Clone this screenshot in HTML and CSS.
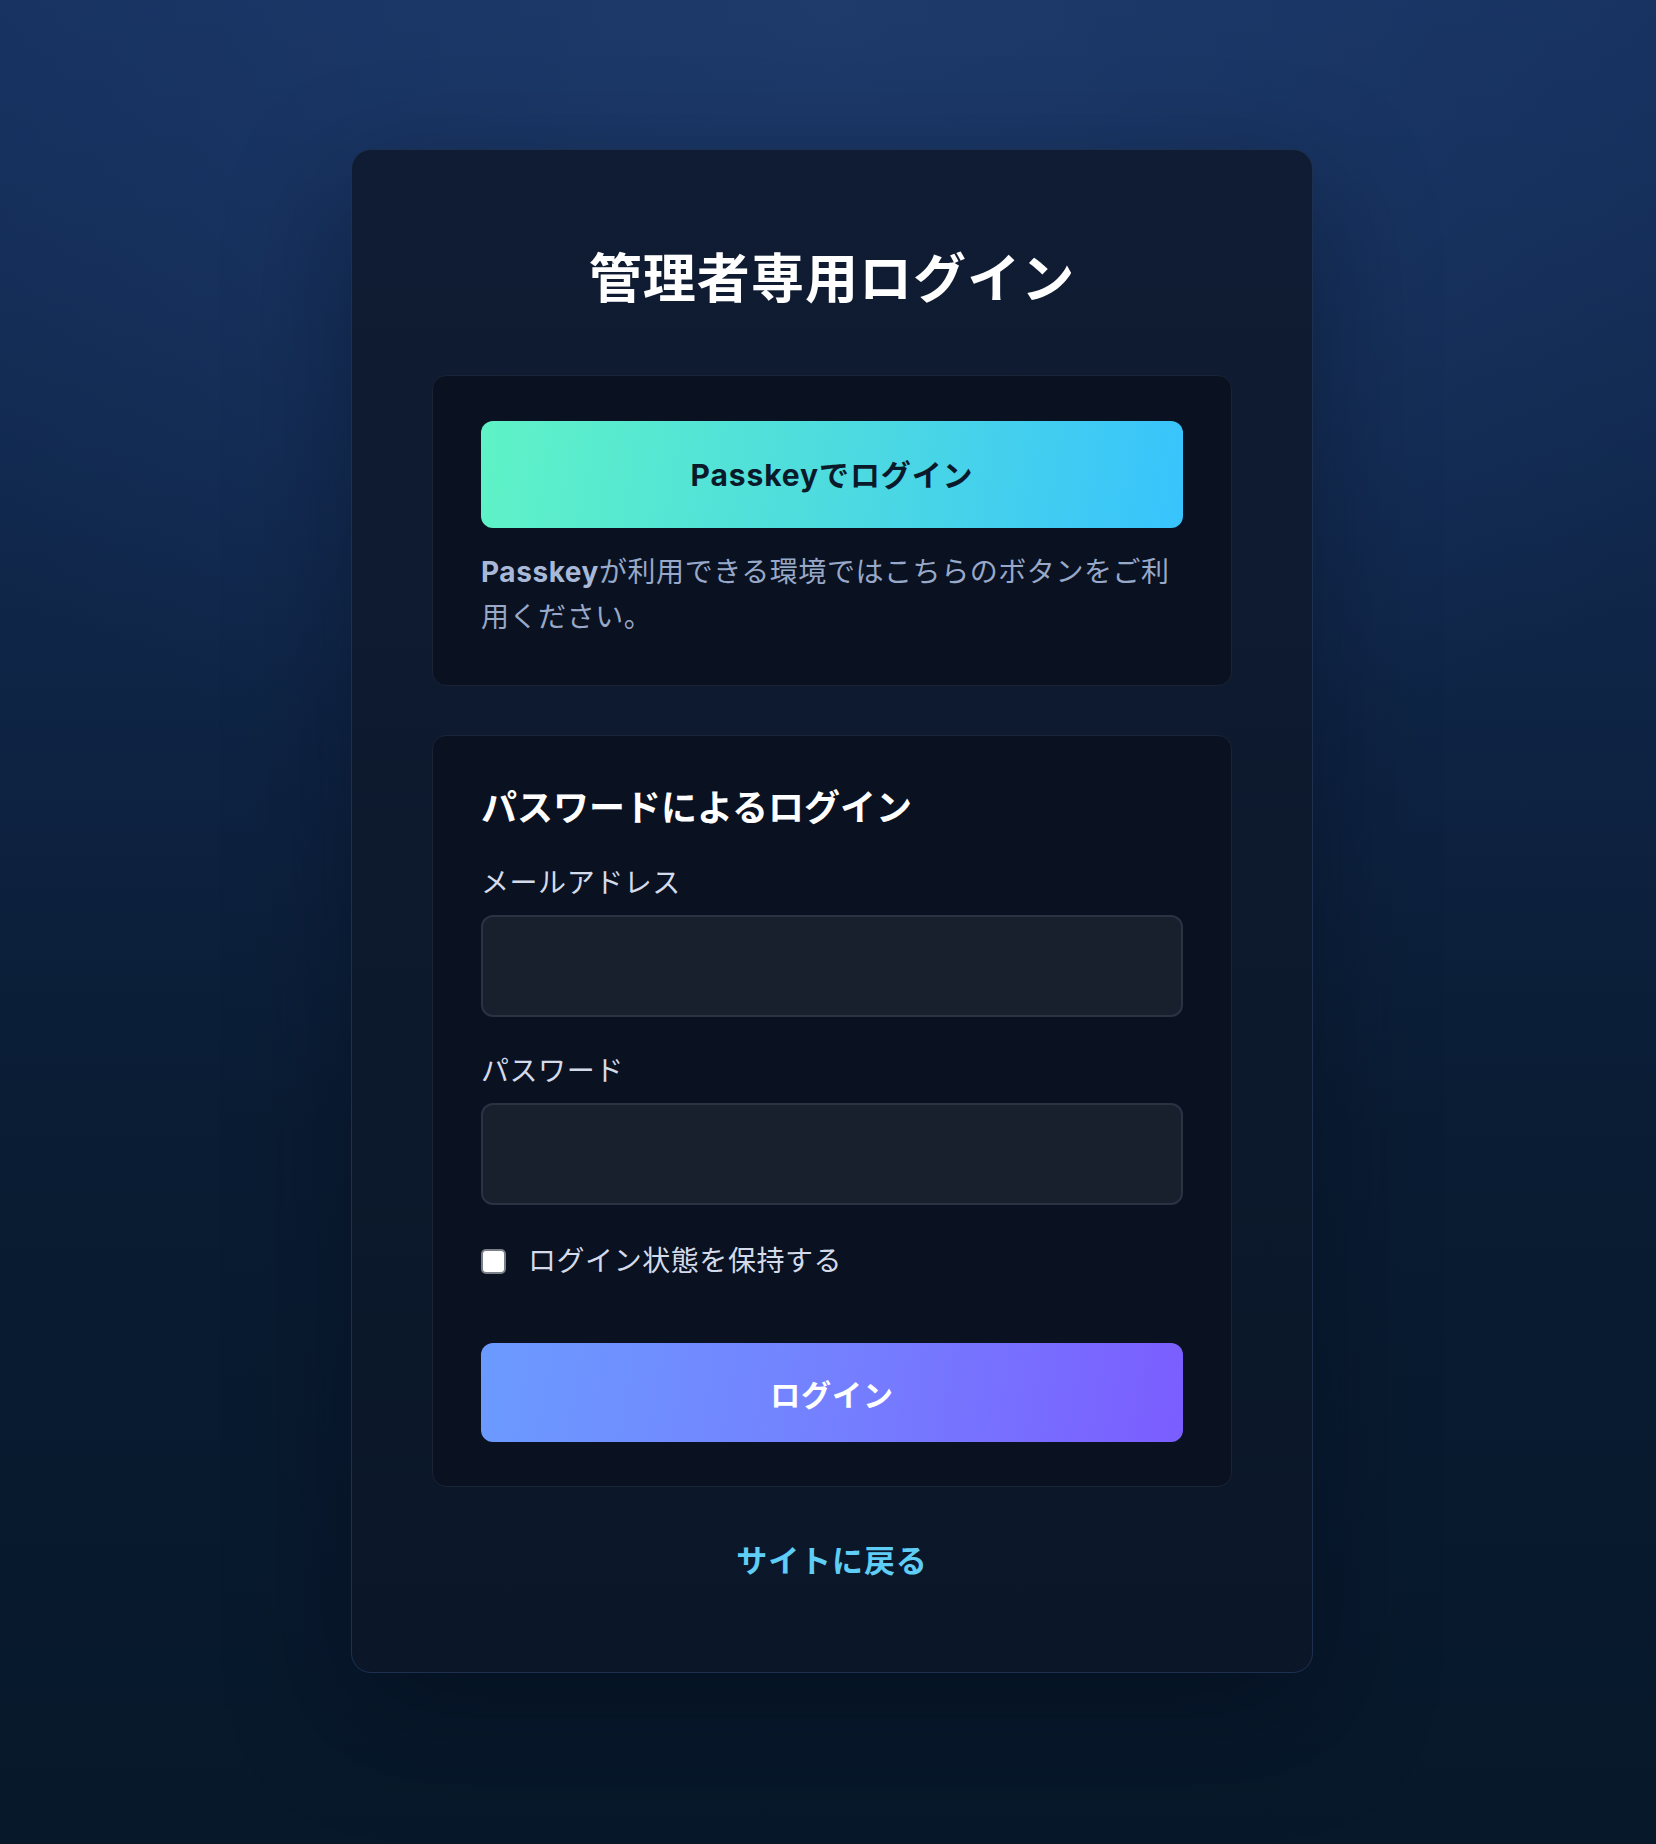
FILE: index.html
```html
<!DOCTYPE html>
<html lang="ja">
<head>
  <meta charset="UTF-8">
  <meta name="viewport" content="width=device-width, initial-scale=1.0">
  <title>管理者専用ログイン</title>
  <link rel="stylesheet" href="styles.css">
</head>
<body>
  <main class="login-page">
    <div class="login-card">
      <h1 class="login-title">管理者専用ログイン</h1>

      <!-- Passkey -->
      <section class="panel">
        <button type="button" class="btn btn-passkey">Passkeyでログイン</button>
        <p class="panel-note"><strong>Passkey</strong>が利用できる環境ではこちらのボタンをご利用ください。</p>
      </section>

      <!-- パスワード -->
      <section class="panel panel-password">
        <h2 class="panel-title">パスワードによるログイン</h2>
        <form class="login-form" onsubmit="return false;">
          <label class="field-label" for="email">メールアドレス</label>
          <input class="field-input" type="email" id="email" name="email">

          <label class="field-label" for="password">パスワード</label>
          <input class="field-input field-last" type="password" id="password" name="password">

          <label class="remember">
            <input type="checkbox" name="remember">
            <span>ログイン状態を保持する</span>
          </label>

          <button type="submit" class="btn btn-login">ログイン</button>
        </form>
      </section>

      <a class="back-link" href="#">サイトに戻る</a>
    </div>
  </main>
</body>
</html>
```

FILE: styles.css
```css
* {
  box-sizing: border-box;
}
html, body {
  margin: 0;
  min-height: 100%;
}
body {
  font-family: 'Inter', 'Noto Sans CJK JP', sans-serif;
  color: #d3dbea;
  min-height: 1844px;
  background:
    radial-gradient(ellipse 70% 45% at 50% 0%, rgba(32, 62, 112, 0.75), rgba(32, 62, 112, 0) 100%),
    linear-gradient(180deg, #15305e 0%, #0f2547 35%, #0a1c33 62%, #07182a 100%);
}
.login-page {
  padding: 149px 0 170px;
  display: flex;
  justify-content: center;
}
.login-card {
  width: 962px;
  padding: 88px 80px 89px;
  border: 1px solid #1d3050;
  border-radius: 20px;
  background: linear-gradient(180deg, #0f1c33 0%, #0c192c 60%, #0b1729 100%);
  box-shadow: 0 40px 120px rgba(2, 8, 20, 0.4);
  margin-left: 8px;
}
.login-title {
  margin: 6px 0 61px;
  font-size: 53px;
  line-height: 70px;
  font-weight: 700;
  letter-spacing: 0.02em;
  text-align: center;
  color: #fff;
}
.panel {
  background: #0a1120;
  border: 1px solid #1b2336;
  border-radius: 14px;
  padding: 45px 48px;
}
.panel-password {
  margin-top: 49px;
  padding-bottom: 44px;
}
.btn {
  display: flex;
  align-items: center;
  justify-content: center;
  width: 100%;
  border: none;
  border-radius: 12px;
  font-family: inherit;
  font-size: 30px;
  font-weight: 700;
  letter-spacing: 0.03em;
  cursor: pointer;
}
.btn-passkey {
  height: 107px;
  padding-bottom: 4px;
  color: #0b1a2a;
  background: linear-gradient(100deg, #5ff3c6 0%, #4edbdf 50%, #38c3fd 100%);
}
.panel-note {
  margin: 22px 0 0;
  font-size: 28px;
  line-height: 45px;
  letter-spacing: 0.02em;
  color: #97a8c8;
}
.panel-note strong {
  color: #a7b8d8;
}
.panel-title {
  margin: 0 0 27px;
  font-size: 36px;
  line-height: 54px;
  font-weight: 700;
  color: #fff;
}
.login-form {
  display: flex;
  flex-direction: column;
}
.field-label {
  font-size: 28px;
  line-height: 42px;
  letter-spacing: 0.02em;
  margin-bottom: 11px;
  color: #d3dbea;
}
.field-input {
  height: 102px;
  margin-bottom: 33px;
  border: 2px solid #2a3243;
  border-radius: 12px;
  background: #181f2d;
  color: #fff;
  font-size: 28px;
  padding: 0 24px;
  outline: none;
}
.field-input.field-last {
  margin-bottom: 35px;
}
.remember {
  display: flex;
  align-items: center;
  gap: 22px;
  font-size: 28px;
  line-height: 42px;
  letter-spacing: 0.02em;
  color: #d3dbea;
  margin-bottom: 61px;
}
.remember input {
  appearance: none;
  -webkit-appearance: none;
  width: 25px;
  height: 25px;
  margin: 0;
  background: #fff;
  border: 2px solid #7a7f88;
  border-radius: 5px;
}
.btn-login {
  height: 99px;
  color: #fff;
  background: linear-gradient(100deg, #6b9bff 0%, #7480ff 50%, #7b5dff 100%);
}
.back-link {
  display: block;
  margin-top: 51px;
  text-align: center;
  font-size: 31px;
  line-height: 45px;
  font-weight: 700;
  letter-spacing: 0.03em;
  color: #5fcdf6;
  text-decoration: none;
}
```
